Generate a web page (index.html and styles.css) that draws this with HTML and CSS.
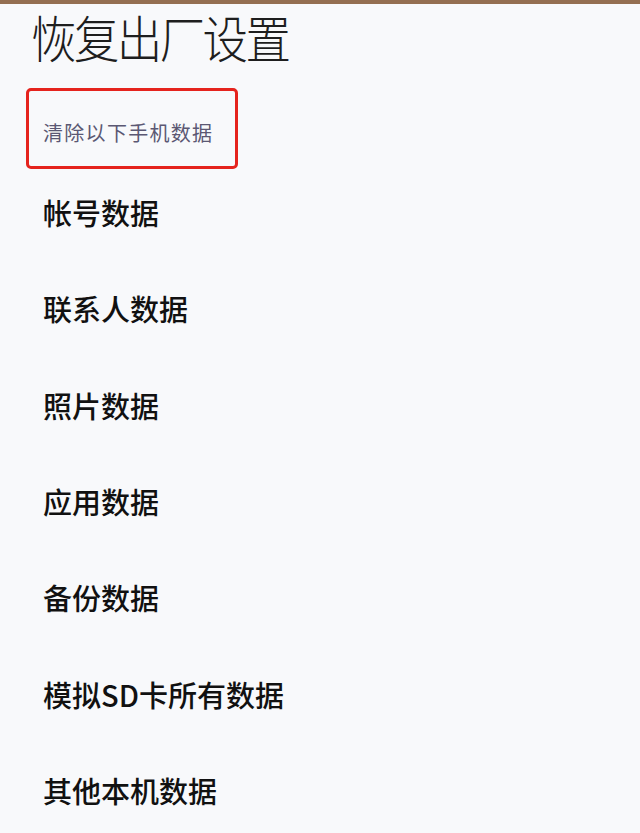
FILE: index.html
```html
<!DOCTYPE html>
<html lang="zh-CN">
<head>
<meta charset="utf-8">
<title>恢复出厂设置</title>
<link rel="stylesheet" href="styles.css">
</head>
<body>
<div class="topbar"></div>
<main class="page">
  <h1 class="title">恢复出厂设置</h1>
  <div class="notice">
    <span class="notice-text">清除以下手机数据</span>
  </div>
  <ul class="data-list">
    <li class="data-item">帐号数据</li>
    <li class="data-item">联系人数据</li>
    <li class="data-item">照片数据</li>
    <li class="data-item">应用数据</li>
    <li class="data-item">备份数据</li>
    <li class="data-item">模拟SD卡所有数据</li>
    <li class="data-item">其他本机数据</li>
  </ul>
</main>
</body>
</html>
```
FILE: styles.css
```css
html, body {
  margin: 0;
  padding: 0;
}

body {
  background: #f8f9fb;
  font-family: "Noto Sans CJK SC", "Noto Sans", sans-serif;
  color: #111;
  height: 833px;
  overflow: hidden;
}

.topbar {
  height: 4px;
  background: #946f52;
}

.page {
  padding: 0 0 0 26px;
}

/* page heading: thin, slightly tall glyphs */
.title {
  margin: 4px 0 0 5px;
  height: 60px;
  font-size: 45.5px;
  font-weight: 300;
  line-height: 50px;
  color: #1e1e1e;
  letter-spacing: -2.6px;
  transform: scaleY(1.1);
  transform-origin: 0 0;
}

.notice {
  margin-top: 20px;
  width: 206px;
  height: 75px;
  border: 3px solid #e5231d;
  border-radius: 5px;
  display: flex;
  align-items: flex-end;
  box-sizing: content-box;
}

.notice-text {
  margin: 0 0 19px 14px;
  font-size: 20px;
  line-height: 28px;
  color: #5b5873;
  letter-spacing: 1.3px;
}

.data-list {
  list-style: none;
  margin: 0;
  padding: 0 0 0 17px;
}

.data-item {
  height: 96.3px;
  display: flex;
  align-items: center;
  font-size: 29px;
  font-weight: 500;
  color: #111;
}

.data-item:first-child {
  margin-top: -5px;
}
```
